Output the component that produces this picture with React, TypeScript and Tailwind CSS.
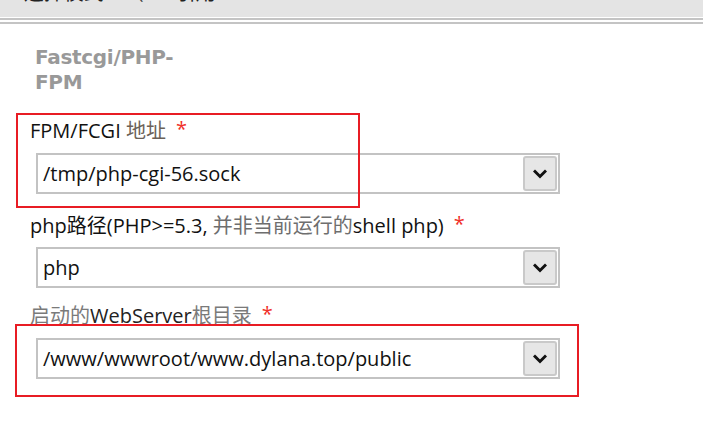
const FONT = "font-['Open_Sans','Noto_Sans_CJK_SC',sans-serif]";

function Chevron() {
  return (
    <svg width="14" height="10" viewBox="0 0 14 10" className="block">
      <path d="M2 2.5 L7 7.5 L12 2.5" fill="none" stroke="#111" strokeWidth="3" strokeLinecap="square" />
    </svg>
  );
}

function SelectBox({ value }: { value: string }) {
  return (
    <div className="ml-[36px] w-[524px] h-[41px] border-2 border-[#c3c3c3] bg-white flex items-center pl-[5px] pr-[1px]">
      <span className="flex-1 text-[20px] leading-[28px] text-[#111]">{value}</span>
      <div className="w-[34px] h-[35px] rounded-[3px] border-2 border-[#c9c9c9] bg-[#e6e6e6] flex items-center justify-center">
        <Chevron />
      </div>
    </div>
  );
}

function Star() {
  return <span className="text-[#f0302a] ml-[10px] relative -top-[2px]">*</span>;
}

export default function App() {
  return (
    <div className={`relative w-[703px] h-[421px] overflow-hidden bg-white ${FONT}`}>
      {/* header strip, scrolled so only the bottom of its text shows */}
      <div className="h-[17px] bg-[#e4e4e4] overflow-hidden">
        <div className="-mt-[19px] pl-[6px] text-[20px] leading-[24px] text-[#222] whitespace-nowrap">
          <span>C 选择模式</span>
          <span className="ml-[20px] text-[#444]">（</span>
          <span className="ml-[6px] text-[#d88a2a]">一</span>
          <span className="ml-[6px]">引用</span>
        </div>
      </div>
      <div className="h-px bg-white" />
      <div className="h-[2px] bg-[#c4c4c4]" />
      <div className="h-[2px] bg-white" />
      <div className="h-[2px] bg-[#c4c4c4]" />

      {/* section title */}
      <div className="pl-[35px] pt-[21px] font-['DejaVu_Sans',sans-serif] font-bold text-[20px] leading-[25px] text-[#999999] tracking-[-0.3px]">
        Fastcgi/PHP-
        <br />
        FPM
      </div>

      {/* field 1 */}
      <div className="mt-[22px] pl-[30px] text-[20px] leading-[28px] text-[#111]">
        FPM/FCGI <span className="text-[#6b6158]">地址</span>
        <Star />
      </div>
      <div className="mt-[8px]">
        <SelectBox value="/tmp/php-cgi-56.sock" />
      </div>

      {/* field 2 */}
      <div className="mt-[18px] pl-[30px] text-[20px] leading-[28px] text-[#111] whitespace-nowrap">
        php路径(PHP&gt;=5.3, <span className="text-[#6e6e6e]">并非当前运行的</span>shell php)
        <Star />
      </div>
      <div className="mt-[7px]">
        <SelectBox value="php" />
      </div>

      {/* field 3 */}
      <div className="mt-[14px] pl-[30px] text-[20px] leading-[28px] whitespace-nowrap">
        <span className="text-[#7a7a7a]">启动的</span>
        <span className="text-[#222]">WebServer</span>
        <span className="text-[#7a7a7a]">根目录</span>
        <Star />
      </div>
      <div className="mt-[8px]">
        <SelectBox value="/www/wwwroot/www.dylana.top/public" />
      </div>

      {/* red annotation boxes */}
      <div className="absolute left-[16px] top-[113px] w-[344px] h-[95px] border-2 border-[#e81c24]" />
      <div className="absolute left-[15px] top-[324px] w-[564px] h-[73px] border-2 border-[#e81c24]" />
    </div>
  );
}
